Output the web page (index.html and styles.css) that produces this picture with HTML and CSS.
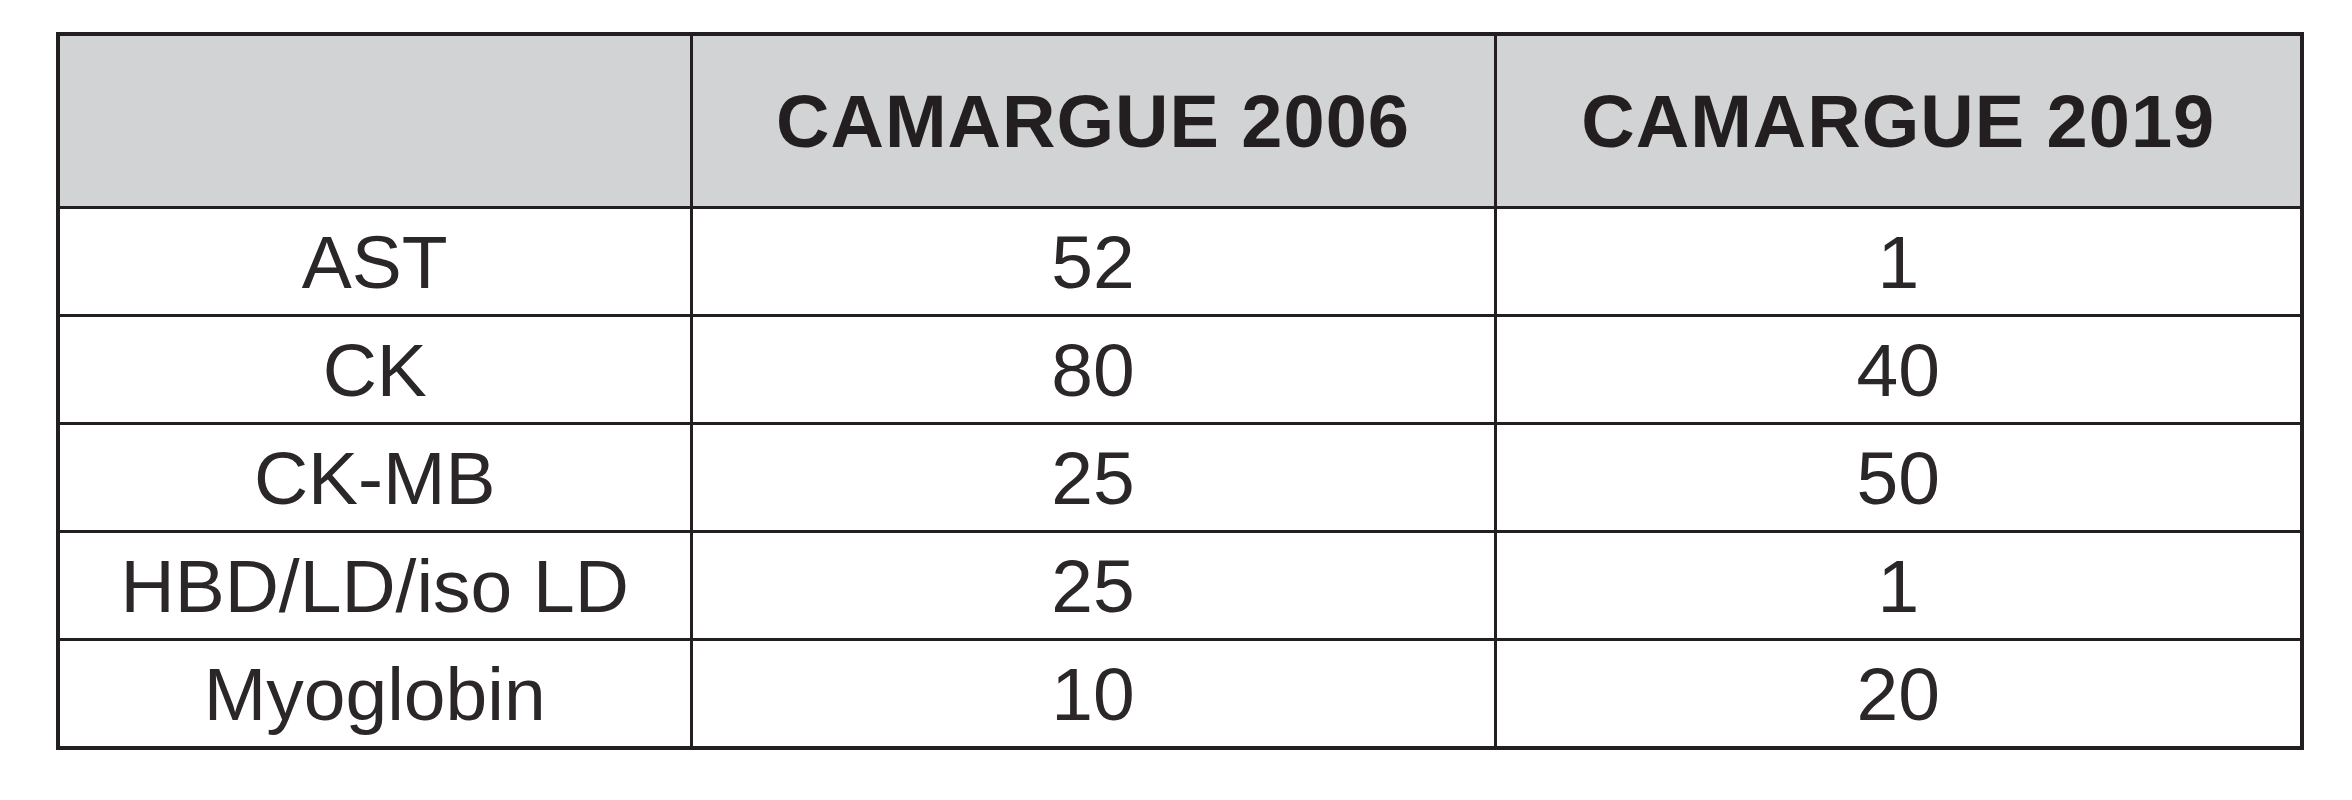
FILE: index.html
```html
<!DOCTYPE html>
<html>
<head>
<meta charset="utf-8">
<link rel="stylesheet" href="styles.css">
</head>
<body>
<table class="grid">
  <colgroup>
    <col class="c1"><col class="c2"><col class="c3">
  </colgroup>
  <thead>
    <tr class="head">
      <th></th>
      <th>CAMARGUE 2006</th>
      <th>CAMARGUE 2019</th>
    </tr>
  </thead>
  <tbody>
    <tr><td>AST</td><td>52</td><td>1</td></tr>
    <tr><td>CK</td><td>80</td><td>40</td></tr>
    <tr><td>CK-MB</td><td>25</td><td>50</td></tr>
    <tr><td>HBD/LD/iso LD</td><td>25</td><td>1</td></tr>
    <tr><td>Myoglobin</td><td>10</td><td>20</td></tr>
  </tbody>
</table>
</body>
</html>
```
FILE: styles.css
```css
html, body {
  margin: 0;
  padding: 0;
  background: #ffffff;
}
body {
  padding: 32px 0 0 56px;
  font-family: "Liberation Sans", Arial, sans-serif;
  color: #231f20;
}
.grid {
  border-collapse: collapse;
  border: 4px solid #231f20;
  table-layout: fixed;
  width: 2248px;
}
.c1 { width: 633px; }
.c2 { width: 804px; }
.c3 { width: 807px; }
.grid th, .grid td {
  border: 3px solid #231f20;
  text-align: center;
  vertical-align: middle;
  padding: 0;
}
.grid th {
  background: #d1d3d4;
  font-weight: bold;
  font-size: 74px;
  letter-spacing: 1px;
  height: 170px;
}
.grid td {
  font-size: 75px;
  font-weight: normal;
  color: #2b2728;
  height: 105px;
}
```
